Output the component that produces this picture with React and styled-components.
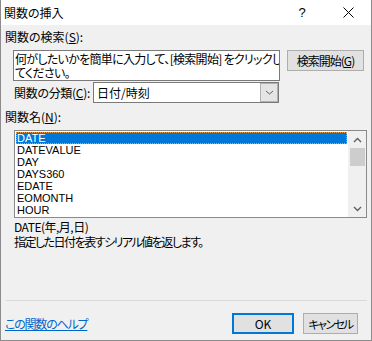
import React from 'react';
import styled, { createGlobalStyle } from 'styled-components';

const GlobalStyle = createGlobalStyle`
  html, body { margin: 0; padding: 0; background: #f0f0f0; }
  body {
    font-family: "Noto Sans CJK JP", "Noto Sans", sans-serif;
    font-size: 12px;
    color: #000;
  }
  * { box-sizing: border-box; }
`;

const Window = styled.div`
  width: 372px;
  height: 341px;
  display: flex;
  flex-direction: column;
  background: #f0f0f0;
  border: 1px solid #8c8c8c;
  border-top: none;
  font-feature-settings: "palt" 1;
  overflow: hidden;
`;

const TitleBar = styled.div`
  height: 25px;
  flex-shrink: 0;
  background: #fff;
  display: flex;
  align-items: center;
  padding-left: 3px;
`;

const Title = styled.div`
  flex: 1;
  font-size: 12px;
  line-height: 14px;
  white-space: nowrap;
`;

const TitleButton = styled.div`
  width: 46px;
  height: 25px;
  display: flex;
  align-items: center;
  justify-content: center;
  font-family: "Liberation Sans", sans-serif;
  font-size: 13px;
`;

const Body = styled.div`
  flex: 1;
  display: flex;
  flex-direction: column;
  padding: 5px 0 6px 4px;
`;

const Label = styled.div`
  font-size: 12px;
  line-height: 14px;
  white-space: nowrap;
  margin-top: ${p => p.$top || 0}px;
  width: ${p => (p.$width ? `${p.$width}px` : 'auto')};
  letter-spacing: ${p => p.$ls || 0}px;
  flex-shrink: 0;
`;

const Mn = styled.span`
  text-decoration: underline;
`;

const SearchRow = styled.div`
  display: flex;
  align-items: flex-start;
  margin-top: 6px;
  padding-left: 8px;
`;

const TextBox = styled.div`
  width: 267px;
  height: 31px;
  border: 1px solid #7a7a7a;
  background: #fff;
  padding: 1px 1px;
  font-size: 12px;
  line-height: 14px;
  overflow: hidden;
`;

const Line = styled.div`
  white-space: nowrap;
  letter-spacing: ${p => p.$ls || 0}px;
`;

const Button = styled.div`
  width: ${p => p.$w}px;
  height: 21px;
  margin-left: ${p => p.$ml || 0};
  flex-shrink: 0;
  display: flex;
  align-items: center;
  justify-content: center;
  background: #e1e1e1;
  border: ${p => (p.$primary ? '2px solid #0078d7' : '1px solid #adadad')};
  font-size: ${p => p.$fs || 12}px;
  line-height: 14px;
  letter-spacing: ${p => p.$ls || 0}px;
  white-space: nowrap;
`;

const CategoryRow = styled.div`
  display: flex;
  align-items: center;
  margin-top: 1px;
  padding-left: 9px;
`;

const Select = styled.div`
  width: 186px;
  height: 21px;
  display: flex;
  border: 1px solid #7a7a7a;
  background: #fff;
`;

const SelectValue = styled.div`
  flex: 1;
  padding-left: 3px;
  font-size: 12px;
  line-height: 19px;
  white-space: nowrap;
`;

const DropButton = styled.div`
  width: 18px;
  display: flex;
  align-items: center;
  justify-content: center;
  background: #e5e5e5;
  border: 1px solid #b0b0b0;
`;

const ListBox = styled.div`
  width: 353px;
  height: 88px;
  margin: 6px 0 0 9px;
  display: flex;
  border: 1px solid #8a8a8a;
  background: #fff;
`;

const Items = styled.div`
  flex: 1;
  padding: 1px;
  display: flex;
  flex-direction: column;
`;

const Item = styled.div`
  height: 12px;
  line-height: ${p => (p.$selected ? 10 : 12)}px;
  padding-left: ${p => (p.$selected ? 0 : 1)}px;
  font-family: "Liberation Sans", Arial, sans-serif;
  font-size: 11px;
  white-space: nowrap;
  color: ${p => (p.$selected ? '#fff' : '#000')};
  background: ${p => (p.$selected ? '#0078d7' : 'transparent')};
  border: ${p => (p.$selected ? '1px dotted #e9a04a' : 'none')};
`;

const ScrollBar = styled.div`
  width: 18px;
  display: flex;
  flex-direction: column;
  align-items: center;
  background: #f0f0f0;
`;

const ArrowBox = styled.div`
  width: 100%;
  height: 17px;
  display: flex;
  align-items: center;
  justify-content: center;
  margin-top: ${p => (p.$bottom ? 'auto' : '0')};
`;

const Thumb = styled.div`
  width: 15px;
  height: 18px;
  background: #cdcdcd;
`;

const Description = styled.div`
  margin-top: 1px;
  padding-left: 9px;
  font-size: 12px;
  line-height: 15px;
`;

const Separator = styled.div`
  margin: auto 4px 0 1px;
  height: 1px;
  background: #d9d9d9;
`;

const Footer = styled.div`
  margin-top: 12px;
  height: 21px;
  display: flex;
  align-items: center;
  padding-right: 13px;
`;

const HelpLink = styled.a`
  color: #0066cc;
  text-decoration: underline;
  font-size: 12px;
  line-height: 14px;
  letter-spacing: -1.2px;
  white-space: nowrap;
`;

const Chevron = ({ up }) => (
  <svg width="9" height="6" viewBox="0 0 9 6">
    <path
      d={up ? 'M1 5 L4.5 1.5 L8 5' : 'M1 1 L4.5 4.5 L8 1'}
      fill="none"
      stroke="#606060"
      strokeWidth="1.4"
    />
  </svg>
);

const SmallChevron = () => (
  <svg width="9" height="5" viewBox="0 0 9 5">
    <path d="M1 1 L4.5 4 L8 1" fill="none" stroke="#606060" strokeWidth="1" />
  </svg>
);

const CloseIcon = () => (
  <svg width="11" height="11" viewBox="0 0 11 11">
    <path d="M0.5 0.5 L10.5 10.5 M10.5 0.5 L0.5 10.5" stroke="#000" strokeWidth="1" />
  </svg>
);

const functions = ['DATE', 'DATEVALUE', 'DAY', 'DAYS360', 'EDATE', 'EOMONTH', 'HOUR'];

export default function App() {
  return (
    <>
      <GlobalStyle />
      <Window>
        <TitleBar>
          <Title>関数の挿入</Title>
          <TitleButton>?</TitleButton>
          <TitleButton>
            <CloseIcon />
          </TitleButton>
        </TitleBar>
        <Body>
          <Label>
            関数の検索(<Mn>S</Mn>):
          </Label>
          <SearchRow>
            <TextBox>
              <Line $ls={-0.7}>何がしたいかを簡単に入力して、[検索開始] をクリックし</Line>
              <Line $ls={-0.7}>てください。</Line>
            </TextBox>
            <Button $w={77} $ml="7px" $ls={-1}>
              検索開始(<Mn>G</Mn>)
            </Button>
          </SearchRow>
          <CategoryRow>
            <Label $width={79} $ls={-0.3}>
              関数の分類(<Mn>C</Mn>):
            </Label>
            <Select>
              <SelectValue>日付/時刻</SelectValue>
              <DropButton>
                <SmallChevron />
              </DropButton>
            </Select>
          </CategoryRow>
          <Label $top={7}>
            関数名(<Mn>N</Mn>):
          </Label>
          <ListBox>
            <Items>
              {functions.map((f, i) => (
                <Item key={f} $selected={i === 0}>
                  {f}
                </Item>
              ))}
            </Items>
            <ScrollBar>
              <ArrowBox>
                <Chevron up />
              </ArrowBox>
              <Thumb />
              <ArrowBox $bottom>
                <Chevron />
              </ArrowBox>
            </ScrollBar>
          </ListBox>
          <Description>
            <Line $ls={-0.5}>DATE(年,月,日)</Line>
            <Line $ls={-1.5}>指定した日付を表すシリアル値を返します。</Line>
          </Description>
          <Separator />
          <Footer>
            <HelpLink href="#">この関数のヘルプ</HelpLink>
            <Button $w={62} $ml="auto" $primary>
              OK
            </Button>
            <Button $w={55} $ml="9px" $ls={-1.6} $fs={11.5}>
              キャンセル
            </Button>
          </Footer>
        </Body>
      </Window>
    </>
  );
}
